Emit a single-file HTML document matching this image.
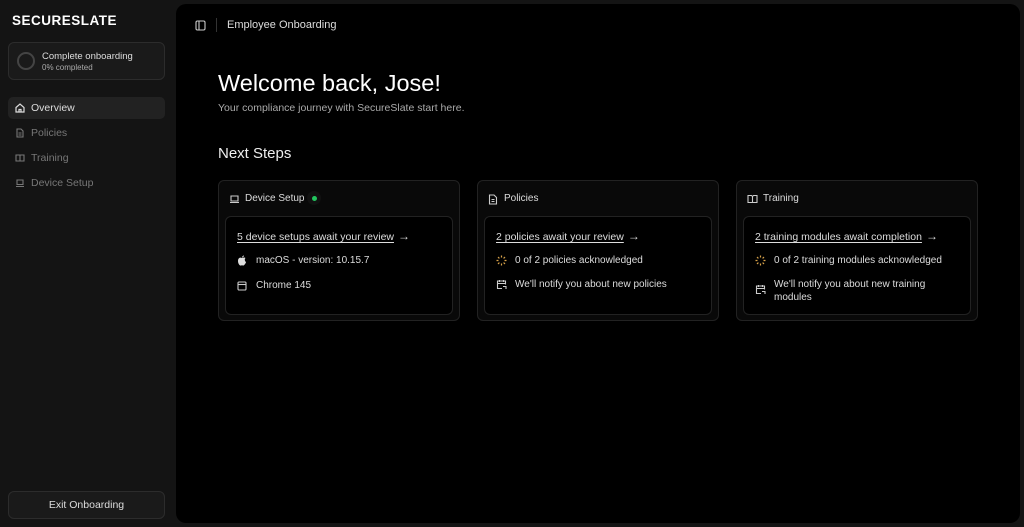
<!DOCTYPE html><html><head><style>
*{box-sizing:border-box;margin:0;padding:0}
body{width:1024px;height:527px;background:#141414;font-family:"Liberation Sans",sans-serif;color:#eee;position:relative;overflow:hidden}
.logo{position:absolute;left:12px;top:13px;font-weight:bold;font-size:13.5px;letter-spacing:.5px;color:#fff}
.prog{position:absolute;left:8px;top:42px;width:157px;height:38px;border:1px solid #2c2c2c;border-radius:6px;background:#1a1a1a}
.prog .c{position:absolute;left:8px;top:9px;width:18px;height:18px;border:2px solid #444;border-radius:50%}
.prog .t1{position:absolute;left:33px;top:8px;font-size:9.5px;color:#ddd}
.prog .t2{position:absolute;left:33px;top:20px;font-size:8px;color:#aaa}
.nav{position:absolute;left:8px;width:157px;height:22px;border-radius:5px;font-size:10.5px;color:#777;padding:5px 0 0 23px}
.nav.a{background:#222;color:#ddd}
.nav svg{position:absolute;left:7px;top:6px}
.exit{position:absolute;left:8px;top:491px;width:157px;height:28px;border:1px solid #2c2c2c;border-radius:6px;background:#1a1a1a;font-size:10.5px;text-align:center;line-height:27px;color:#ddd}
.main{position:absolute;left:176px;top:4px;width:844px;height:519px;background:#000;border-radius:10px}
.hdr{position:absolute;left:51px;top:15px;font-size:11px;color:#ddd}
h1{position:absolute;left:42px;top:66px;font-size:23.5px;font-weight:normal;color:#fff}
.sub{position:absolute;left:42px;top:98px;font-size:10.5px;color:#aaa}
h2{position:absolute;left:42px;top:141px;font-size:15px;font-weight:normal;color:#eee}
.card{position:absolute;top:176px;width:242px;height:141px;border:1px solid #222;border-radius:6px;background:#090909}
.card .ti{position:absolute;left:26px;top:12px;font-size:10px;color:#ddd}
.card .ic{position:absolute;left:10px;top:13px}
.in{position:absolute;left:6px;top:35px;right:6px;height:99px;border:1px solid #222;border-radius:6px;background:#000}
.lk{position:absolute;left:11px;top:12px;font-size:10.5px;color:#ddd;text-decoration:underline;text-underline-offset:2px}
.ar{display:inline-block;font-size:12px;margin-left:4px}
.row{position:absolute;left:30px;font-size:10px;color:#ddd;line-height:12.5px}
.ri{position:absolute;left:11px}
</style></head><body>
<div class="logo">SECURESLATE</div>
<div class="prog"><div class="c"></div><div class="t1">Complete onboarding</div><div class="t2">0% completed</div></div>
<div class="nav a" style="top:97px"><svg width="10" height="10" viewBox="0 0 10 10" fill="none" stroke="#ddd" stroke-width="1.2"><path d="M1 4.5L5 1l4 3.5V9H1z"/><path d="M4 9V6.5h2V9"/></svg>Overview</div>
<div class="nav" style="top:122px"><svg width="10" height="10" viewBox="0 0 10 10" fill="none" stroke="#777" stroke-width="1.1"><path d="M2 1h4l2 2v6H2z"/><path d="M3.5 5h3M3.5 7h3"/></svg>Policies</div>
<div class="nav" style="top:147px"><svg width="10" height="10" viewBox="0 0 10 10" fill="none" stroke="#777" stroke-width="1.1"><path d="M1 2h3.5l.5.5.5-.5H9v6H1zM5 2.5V8"/></svg>Training</div>
<div class="nav" style="top:172px"><svg width="10" height="10" viewBox="0 0 10 10" fill="none" stroke="#777" stroke-width="1.1"><path d="M2 2h6v4.5H2zM1 8.5h8"/></svg>Device Setup</div>
<div class="exit">Exit Onboarding</div>
<div class="main">
<svg style="position:absolute;left:19px;top:16px" width="11" height="11" viewBox="0 0 11 11" fill="none" stroke="#ccc" stroke-width="1.1"><rect x="1" y="1" width="9" height="9" rx="1.5"/><path d="M4 1v9"/></svg>
<div style="position:absolute;left:40px;top:14px;width:1px;height:14px;background:#333"></div>
<div class="hdr">Employee Onboarding</div>
<h1>Welcome back, Jose!</h1>
<div class="sub">Your compliance journey with SecureSlate start here.</div>
<h2>Next Steps</h2>
<div class="card" style="left:42px"><svg class="ic" width="11" height="10" viewBox="0 0 11 10" fill="none" stroke="#ccc" stroke-width="1.1"><path d="M2 2h7v5H2zM1 8.5h9"/></svg><div class="ti">Device Setup</div><div style="position:absolute;left:88px;top:10px;width:14px;height:14px;border-radius:50%;background:#111"></div><div style="position:absolute;left:93px;top:15px;width:5px;height:5px;border-radius:50%;background:#22c55e"></div>
<div class="in"><div class="lk">5 device setups await your review<span class="ar">→</span></div>
<svg class="ri" style="top:38px" width="10" height="11" viewBox="0 0 10 11"><path d="M5 3C3 2 1 3 1 6s2 5 3 4.5c.5-.2 1.5-.2 2 0C7 11 9 8 9 7 7.5 6 7.5 3.7 8.5 3 7 2 6 3 5 3zM5 2.5C5 1.5 6 .5 7 .5 7 1.5 6 2.5 5 2.5z" fill="#ddd"/></svg><div class="row" style="top:38px">macOS - version: 10.15.7</div>
<svg class="ri" style="top:64px" width="10" height="10" viewBox="0 0 10 10" fill="none" stroke="#ccc" stroke-width="1.1"><rect x="1" y="1" width="8" height="8" rx="1"/><path d="M1 3.5h8"/></svg><div class="row" style="top:63px">Chrome 145</div></div></div>
<div class="card" style="left:301px"><svg class="ic" width="10" height="11" viewBox="0 0 10 11" fill="none" stroke="#ccc" stroke-width="1.1"><path d="M1.5 1h4.5l2.5 2.5V10h-7zM3.5 5.5h3M3.5 7.5h3"/></svg><div class="ti">Policies</div>
<div class="in"><div class="lk">2 policies await your review<span class="ar">→</span></div>
<svg class="ri" style="top:38px" width="11" height="11" viewBox="0 0 11 11" stroke="#d9a34a" stroke-width="1.2"><path d="M5.5 .5v2M5.5 8.5v2M.5 5.5h2M8.5 5.5h2M2 2l1.4 1.4M7.6 7.6L9 9M2 9l1.4-1.4M7.6 3.4L9 2"/></svg><div class="row" style="top:38px">0 of 2 policies acknowledged</div>
<svg class="ri" style="top:62px" width="11" height="11" viewBox="0 0 11 11" fill="none" stroke="#ccc" stroke-width="1.1"><path d="M6 9.5H1.5V2h8v3.5M1.5 4.5h8M3.5 1v2M7.5 1v2M7 7.5h3v2.5"/></svg><div class="row" style="top:62px">We'll notify you about new policies</div></div></div>
<div class="card" style="left:560px"><svg class="ic" width="11" height="10" viewBox="0 0 11 10" fill="none" stroke="#ccc" stroke-width="1.1"><path d="M1 1.5h3.5l1 1 1-1H10v7H1zM5.5 2.5v6"/></svg><div class="ti">Training</div>
<div class="in"><div class="lk">2 training modules await completion<span class="ar">→</span></div>
<svg class="ri" style="top:38px" width="11" height="11" viewBox="0 0 11 11" stroke="#d9a34a" stroke-width="1.2"><path d="M5.5 .5v2M5.5 8.5v2M.5 5.5h2M8.5 5.5h2M2 2l1.4 1.4M7.6 7.6L9 9M2 9l1.4-1.4M7.6 3.4L9 2"/></svg><div class="row" style="top:38px">0 of 2 training modules acknowledged</div>
<svg class="ri" style="top:67px" width="11" height="11" viewBox="0 0 11 11" fill="none" stroke="#ccc" stroke-width="1.1"><path d="M6 9.5H1.5V2h8v3.5M1.5 4.5h8M3.5 1v2M7.5 1v2M7 7.5h3v2.5"/></svg><div class="row" style="top:62px">We'll notify you about new training<br>modules</div></div></div>
</div>
</body></html>
